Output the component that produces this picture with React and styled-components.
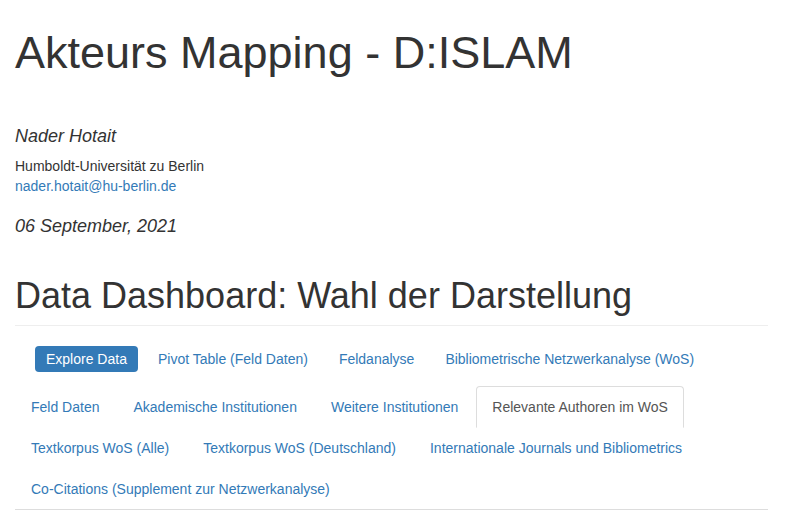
import React, { useState } from "react";
import styled, { createGlobalStyle } from "styled-components";

const GlobalStyle = createGlobalStyle`
  *, *::before, *::after { box-sizing: border-box; }
  body {
    margin: 0;
    background: #fff;
    color: #333;
    font-family: "Liberation Sans", Arial, sans-serif;
    font-size: 14px;
    line-height: 20px;
  }
`;

const Page = styled.main`
  padding: 27px 19px 0 15px;
`;

const Header = styled.header`
  display: flex;
  flex-direction: column;
  align-items: flex-start;
`;

const Title = styled.h1`
  margin: 0 0 47px;
  font-size: 45px;
  font-weight: 400;
  line-height: 52px;
`;

const Meta = styled.p`
  margin: 0;
  font-size: 18px;
  font-style: italic;
  line-height: 20px;
`;

const Address = styled.address`
  display: flex;
  flex-direction: column;
  align-items: flex-start;
  margin: 10px 0 20px;
  font-style: normal;
`;

const MailLink = styled.a`
  color: #337ab7;
  text-decoration: none;
`;

const SectionTitle = styled.h2`
  margin: 40px 0 20px;
  padding-bottom: 9px;
  border-bottom: 1px solid #eee;
  font-size: 36px;
  font-weight: 400;
  line-height: 40px;
`;

const Pills = styled.nav`
  display: flex;
  flex-wrap: wrap;
  gap: 9px;
  padding-left: 20px;
`;

const Pill = styled.button`
  padding: 3px 11px;
  border: 0;
  border-radius: 4px;
  background: ${(p) => (p.$active ? "#337ab7" : "transparent")};
  color: ${(p) => (p.$active ? "#fff" : "#337ab7")};
  font: inherit;
  cursor: pointer;
`;

const Tabs = styled.nav`
  display: flex;
  flex-wrap: wrap;
  column-gap: 2px;
  margin-top: 14px;
  border-bottom: 1px solid #ddd;
`;

const Tab = styled.button`
  height: 42px;
  margin-bottom: -1px;
  padding: 10px 15px;
  border: 1px solid ${(p) => (p.$active ? "#ddd" : "transparent")};
  border-bottom-color: transparent;
  border-radius: 4px 4px 0 0;
  background: ${(p) => (p.$active ? "#fff" : "transparent")};
  color: ${(p) => (p.$active ? "#555" : "#337ab7")};
  font: inherit;
  cursor: pointer;
`;

const views = [
  "Explore Data",
  "Pivot Table (Feld Daten)",
  "Feldanalyse",
  "Bibliometrische Netzwerkanalyse (WoS)",
];

const datasets = [
  "Feld Daten",
  "Akademische Institutionen",
  "Weitere Institutionen",
  "Relevante Authoren im WoS",
  "Textkorpus WoS (Alle)",
  "Textkorpus WoS (Deutschland)",
  "Internationale Journals und Bibliometrics",
  "Co-Citations (Supplement zur Netzwerkanalyse)",
];

export default function App() {
  const [view, setView] = useState(views[0]);
  const [dataset, setDataset] = useState(datasets[3]);

  return (
    <Page>
      <GlobalStyle />
      <Header>
        <Title>Akteurs Mapping - D:ISLAM</Title>
        <Meta>Nader Hotait</Meta>
        <Address>
          <span>Humboldt-Universität zu Berlin</span>
          <MailLink href="mailto:nader.hotait@hu-berlin.de">nader.hotait@hu-berlin.de</MailLink>
        </Address>
        <Meta>06 September, 2021</Meta>
      </Header>
      <section>
        <SectionTitle>Data Dashboard: Wahl der Darstellung</SectionTitle>
        <Pills>
          {views.map((name) => (
            <Pill key={name} type="button" $active={name === view} onClick={() => setView(name)}>
              {name}
            </Pill>
          ))}
        </Pills>
        <Tabs>
          {datasets.map((name) => (
            <Tab key={name} type="button" $active={name === dataset} onClick={() => setDataset(name)}>
              {name}
            </Tab>
          ))}
        </Tabs>
      </section>
    </Page>
  );
}
